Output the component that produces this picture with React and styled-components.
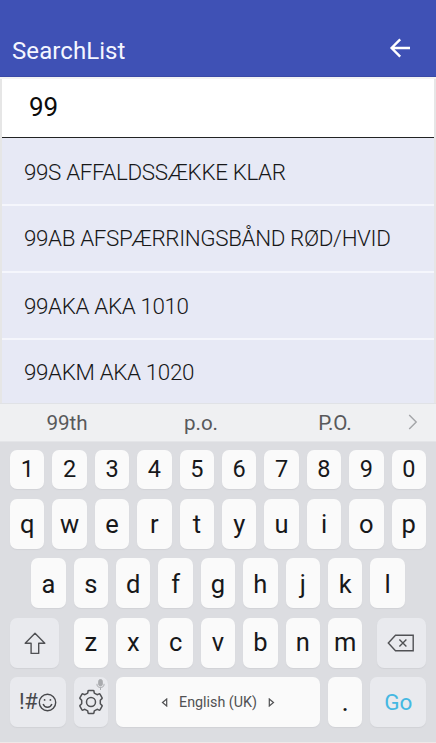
import React from "react";
import styled, { createGlobalStyle } from "styled-components";

const GlobalStyle = createGlobalStyle`
  *, *::before, *::after { box-sizing: border-box; }
  body { margin: 0; background: #dcdde1; overflow: hidden; }
`;

const Screen = styled.main`
  display: flex;
  flex-direction: column;
  width: 436px;
  height: 743px;
  background: #e6e6e6;
  font-family: Roboto, "Liberation Sans", sans-serif;
  overflow: hidden;
`;

const AppBar = styled.header`
  display: flex;
  align-items: flex-end;
  justify-content: space-between;
  height: 77px;
  flex: none;
  padding: 0 25px 11px 12px;
  background: #3f51b5;
  border-bottom: 1px solid #3a49a6;
  color: #f4f6ff;
`;

const Title = styled.h1`
  margin: 0;
  font-size: 24px;
  line-height: 28px;
  font-weight: 400;
  letter-spacing: 0.08px;
`;

const BackButton = styled.button`
  display: flex;
  padding: 0;
  margin-bottom: 7px;
  border: 0;
  background: none;
  color: #fff;
`;

const Content = styled.section`
  display: flex;
  flex-direction: column;
  height: 326px;
  flex: none;
  padding: 0 2px;
  border-top: 2px solid #f3f3f3;
`;

const SearchField = styled.div`
  display: flex;
  align-items: center;
  height: 59px;
  flex: none;
  padding: 0 27px 3px;
  background: #fff;
  border-bottom: 1px solid #222323;
  color: #0c0c0c;
  font-size: 26px;
`;

const Results = styled.ul`
  display: grid;
  grid-template-rows: 66px 65px 65px 65px;
  row-gap: 2px;
  flex: 1;
  margin: 0;
  padding: 0;
  list-style: none;
  background: #f5f6fc;
`;

const Result = styled.li`
  display: flex;
  align-items: center;
  padding: ${(p) => p.$drop || 0}px 0 ${(p) => p.$lift || 0}px 22px;
  background: #e7e9f5;
  color: #171819;
  font-size: 22.4px;
  font-weight: 300;
  letter-spacing: -0.36px;
  white-space: nowrap;
`;

const Suggestions = styled.div`
  display: grid;
  grid-template-columns: 134px 134px 134px 1fr;
  align-items: center;
  height: 39px;
  flex: none;
  padding-top: 1px;
  border-top: 1px solid #e0e2e6;
  border-bottom: 1px solid #e4e5e8;
  background: #eff0f2;
`;

const Suggestion = styled.span`
  text-align: center;
  font-size: 20.6px;
  letter-spacing: -0.1px;
  color: #58595b;
`;

const MoreButton = styled.button`
  display: flex;
  padding: 0 0 2px 6px;
  border: 0;
  background: none;
`;

const Keyboard = styled.section`
  display: flex;
  flex-direction: column;
  gap: 9.6px;
  flex: 1;
  padding: 8px 10px 0;
  background: #dcdde1;
  border-bottom: 1px solid #efe8e8;
`;

const KeyRow = styled.div`
  display: flex;
  justify-content: ${(p) => (p.$spread ? "space-between" : "center")};
  gap: 8.1px;
  height: ${(p) => p.$height || 49.8}px;
`;

const KeyGroup = styled.div`
  display: flex;
  gap: 8.1px;
`;

const Key = styled.button`
  position: relative;
  display: flex;
  align-items: center;
  justify-content: center;
  flex: none;
  width: ${(p) => p.$width || 34.3}px;
  height: 100%;
  padding: ${(p) => p.$drop || 0}px 0 0;
  border: 0;
  border-radius: 7px;
  background: ${(p) => (p.$muted ? "#e9eaee" : "#fafafa")};
  box-shadow: 0 1px 1px rgba(120, 122, 130, 0.1);
  color: ${(p) => p.$color || "#17181a"};
  font-family: inherit;
  font-size: ${(p) => p.$size || 25.5}px;
  line-height: 1;
`;

const SymbolText = styled.span`
  font-size: 22px;
  letter-spacing: -0.2px;
`;

const MicHint = styled.span`
  position: absolute;
  top: 2px;
  right: 3px;
  display: flex;
`;

const SpaceLabel = styled.span`
  display: flex;
  align-items: center;
  gap: 11px;
  font-size: 14.3px;
  color: #505153;
`;

const BackArrow = () => (
  <svg width="22" height="20" viewBox="0 0 22 20" fill="none" stroke="currentColor" strokeWidth="2.4">
    <path d="M11.2 1.4 2.6 10l8.6 8.6M3 10h18" />
  </svg>
);

const Chevron = () => (
  <svg width="10" height="16" viewBox="0 0 10 16" fill="none" stroke="#a3a5a8" strokeWidth="1.4">
    <path d="m1.2 1 7 7-7 7" />
  </svg>
);

const ShiftIcon = () => (
  <svg width="22" height="23" viewBox="0 0 22 23" fill="none" stroke="#505154" strokeWidth="1.4" strokeLinejoin="round">
    <path d="M11 1.3 1.2 11.3h5.9v10.1h7.6V11.3h6.1z" />
  </svg>
);

const BackspaceIcon = () => (
  <svg width="28" height="18" viewBox="0 0 28 18" fill="none" stroke="#505154" strokeWidth="1.4">
    <path d="M8.5 1.3h17.7v15.4H8.5L1.3 9zM12.4 5.6l7 6.8M19.4 5.6l-7 6.8" />
  </svg>
);

const SmileIcon = () => (
  <svg width="19" height="19" viewBox="0 0 19 19" fill="none" stroke="#48494c" strokeWidth="1.4">
    <circle cx="9.5" cy="9.5" r="8.2" />
    <path d="M5.1 11c.8 2.2 2.3 3.2 4.4 3.2s3.6-1 4.4-3.2" />
    <circle cx="6.6" cy="6.9" r=".9" fill="#48494c" stroke="none" />
    <circle cx="12.4" cy="6.9" r=".9" fill="#48494c" stroke="none" />
  </svg>
);

const GearIcon = () => (
  <svg width="24" height="26" viewBox="0 0 24 26" fill="none" stroke="#505154" strokeWidth="1.5" strokeLinejoin="round">
    <path d="M9.8 1.4h4.4q.6 0 .7.6l.4 2.1 2.8 1.6 2-.8q.6-.2.9.3l2 3.5q.3.5-.1.9l-1.6 1.6v3.6l1.6 1.6q.4.4.1.9l-2 3.5q-.3.5-.9.3l-2-.8-2.8 1.6-.4 2.1q-.1.6-.7.6H9.800q-.6 0-.7-.6l-.4-2.1-2.8-1.600-2 .8q-.6.2-.9-.3l-2-3.500q-.3-.5.1-.9l1.600-1.600v-3.600L1.100 9.600q-.4-.4-.1-.9l2-3.500q.3-.5.9-.3l2 .8 2.800-1.600.4-2.100q.1-.6.7-.6z" />
    <circle cx="12" cy="13" r="4.500" />
  </svg>
);

const MicIcon = () => (
  <svg width="9" height="12" viewBox="0 0 9 12" fill="none" stroke="#a9abae" strokeWidth="1">
    <rect x="2.7" y=".5" width="3.6" height="6.5" rx="1.8" fill="#a9abae" />
    <path d="M1 4.8v1C1 9.4 8 9.4 8 5.8v-1M4.5 8.5V11" />
  </svg>
);

const Triangle = ({ right }) => (
  <svg width="7" height="9" viewBox="0 0 7 9" fill="none" stroke="#505153" strokeWidth="1.2">
    <path d={right ? "M1.3 1v7l4.2-3.5z" : "M5.7 1v7L1.5 4.5z"} />
  </svg>
);

const results = [
  { text: "99S AFFALDSSÆKKE KLAR", drop: 2 },
  { text: "99AB AFSPÆRRINGSBÅND RØD/HVID", lift: 2 },
  { text: "99AKA AKA 1010" },
  { text: "99AKM AKA 1020", lift: 1 },
];

const letters = (chars, size, drop) =>
  chars.split("").map((c) => (
    <Key key={c} $size={size} $drop={drop}>{c}</Key>
  ));

export default function App() {
  return (
    <>
      <GlobalStyle />
      <Screen>
        <AppBar>
          <Title>SearchList</Title>
          <BackButton aria-label="Back"><BackArrow /></BackButton>
        </AppBar>
        <Content>
          <SearchField>99</SearchField>
          <Results>
            {results.map((r) => (
              <Result key={r.text} $lift={r.lift} $drop={r.drop}>{r.text}</Result>
            ))}
          </Results>
        </Content>
        <Suggestions>
          <Suggestion>99th</Suggestion>
          <Suggestion>p.o.</Suggestion>
          <Suggestion>P.O.</Suggestion>
          <MoreButton aria-label="More suggestions"><Chevron /></MoreButton>
        </Suggestions>
        <Keyboard>
          <KeyRow $height={39.4}>{letters("1234567890", 23.5, 1)}</KeyRow>
          <KeyRow>{letters("qwertyuiop", 25.5, 1)}</KeyRow>
          <KeyRow>{letters("asdfghjkl", 25.5, 2)}</KeyRow>
          <KeyRow $spread>
            <Key $muted $width={49} $drop={1} aria-label="Shift"><ShiftIcon /></Key>
            <KeyGroup>{letters("zxcvbnm", 25.5, 1)}</KeyGroup>
            <Key $muted $width={49} aria-label="Backspace"><BackspaceIcon /></Key>
          </KeyRow>
          <KeyRow $spread>
            <Key $muted $width={55.6} $color="#48494c">
              <SymbolText>!#</SymbolText>
              <SmileIcon />
            </Key>
            <Key $muted aria-label="Settings">
              <GearIcon />
              <MicHint><MicIcon /></MicHint>
            </Key>
            <Key $width={203.9}>
              <SpaceLabel>
                <Triangle />
                English (UK)
                <Triangle right />
              </SpaceLabel>
            </Key>
            <Key $size={28}>.</Key>
            <Key $muted $width={55.6} $size={22.5} $drop={1} $color="#45b8e2">Go</Key>
          </KeyRow>
        </Keyboard>
      </Screen>
    </>
  );
}
